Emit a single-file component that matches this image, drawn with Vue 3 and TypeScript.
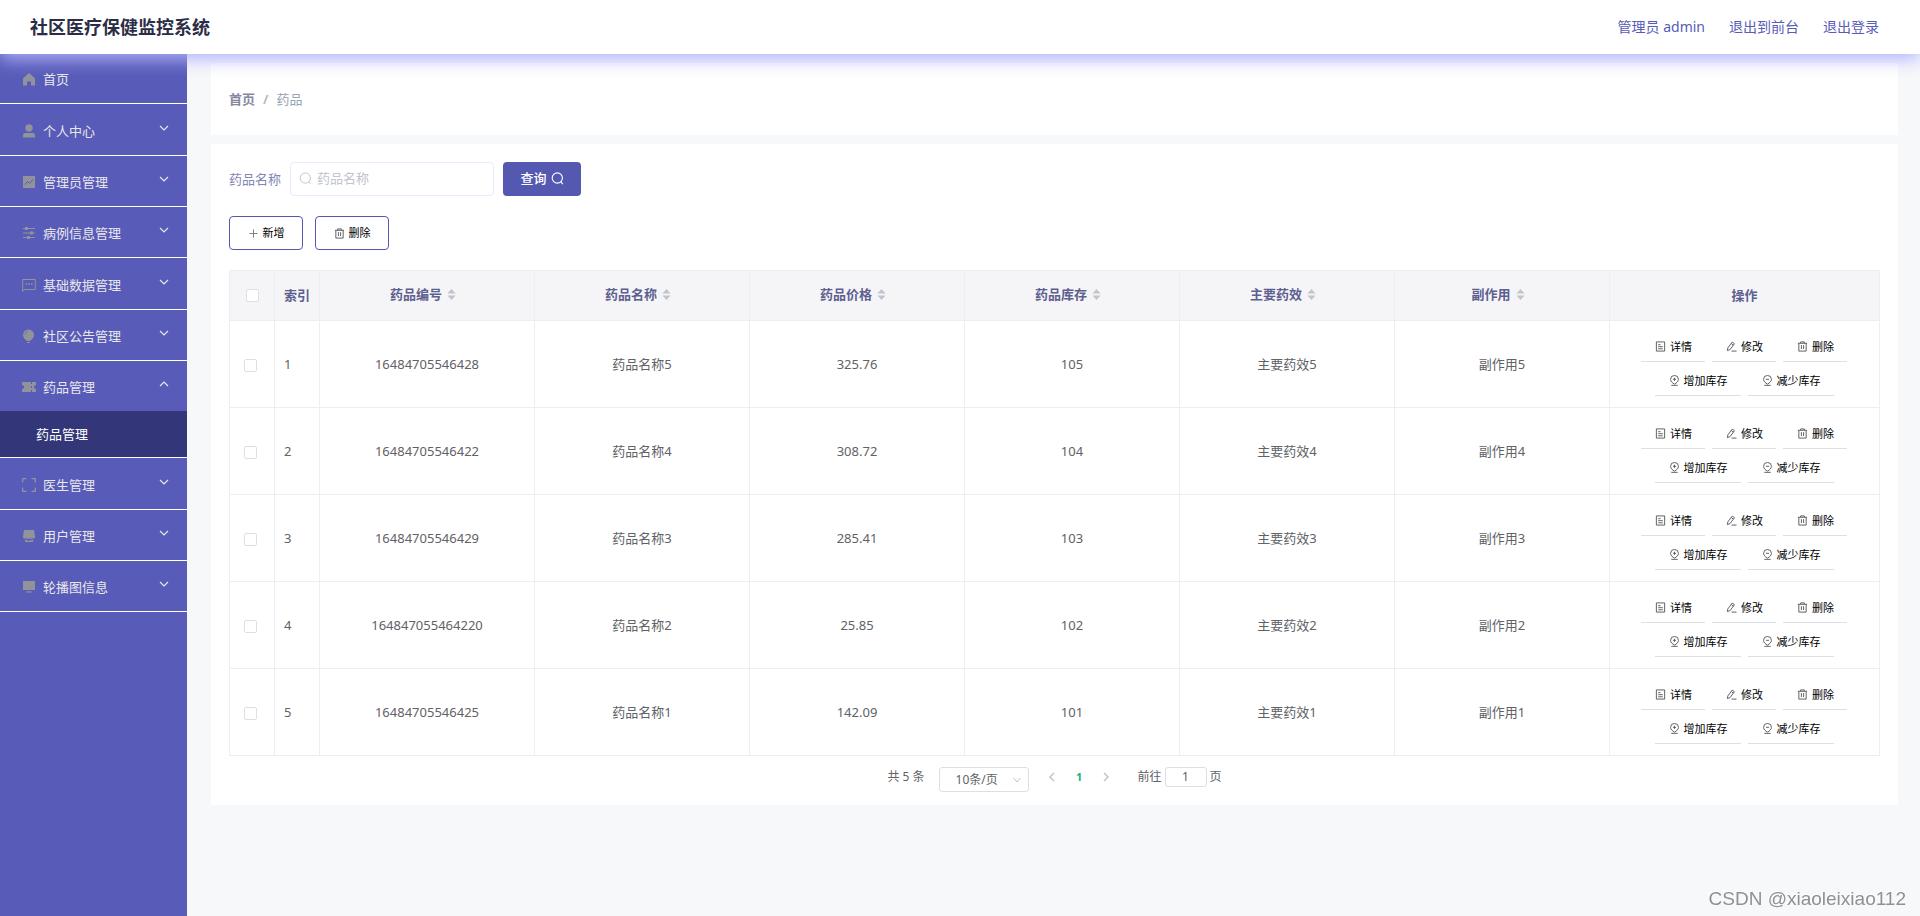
<script setup lang="ts">
import { ref } from 'vue'

interface MenuItem {
  label: string
  icon: string
  children?: string[]
}

interface Drug {
  code: string
  name: string
  price: string
  stock: string
  effect: string
  side: string
}

const menu: MenuItem[] = [
  { label: '个人中心', icon: 'user' },
  { label: '管理员管理', icon: 'chart' },
  { label: '病例信息管理', icon: 'sliders' },
  { label: '基础数据管理', icon: 'message' },
  { label: '社区公告管理', icon: 'balloon' },
  { label: '药品管理', icon: 'ticket', children: ['药品管理'] },
  { label: '医生管理', icon: 'corners' },
  { label: '用户管理', icon: 'shop' },
  { label: '轮播图信息', icon: 'monitor' },
]

const columns = ['药品编号', '药品名称', '药品价格', '药品库存', '主要药效', '副作用']

const drugs: Drug[] = [
  { code: '16484705546428', name: '药品名称5', price: '325.76', stock: '105', effect: '主要药效5', side: '副作用5' },
  { code: '16484705546422', name: '药品名称4', price: '308.72', stock: '104', effect: '主要药效4', side: '副作用4' },
  { code: '16484705546429', name: '药品名称3', price: '285.41', stock: '103', effect: '主要药效3', side: '副作用3' },
  { code: '164847055464220', name: '药品名称2', price: '25.85', stock: '102', effect: '主要药效2', side: '副作用2' },
  { code: '16484705546425', name: '药品名称1', price: '142.09', stock: '101', effect: '主要药效1', side: '副作用1' },
]

const open = ref('药品管理')
const keyword = ref('')
const selected = ref<string[]>([])
const page = ref('1')
const pageSize = ref('10')

function toggle(label: string) {
  open.value = open.value === label ? '' : label
}

function toggleAll(event: Event) {
  const checked = (event.target as HTMLInputElement).checked
  selected.value = checked ? drugs.map((d) => d.code) : []
}
</script>

<template>
  <div class="app">
    <header class="topbar">
      <h1 class="brand">社区医疗保健监控系统</h1>
      <nav class="account">
        <a href="#">管理员 admin</a>
        <a href="#">退出到前台</a>
        <a href="#">退出登录</a>
      </nav>
    </header>

    <div class="body">
      <aside class="sidebar">
        <ul class="menu">
          <li>
            <a class="entry home" href="#">
              <svg class="glyph" viewBox="0 0 14 14" aria-hidden="true">
                <path d="M7 1 1 6.200V13.500h4v-4h4v4h4V6.200z" fill="currentColor" />
              </svg>
              <span>首页</span>
            </a>
          </li>
          <li v-for="item in menu" :key="item.label">
            <button class="entry" type="button" :aria-expanded="open === item.label" @click="toggle(item.label)">
              <svg class="glyph" viewBox="0 0 14 14" aria-hidden="true">
                <g v-if="item.icon === 'user'" fill="currentColor">
                  <circle cx="7" cy="4" r="3.700" />
                  <path d="M1 13.500v-2.200A2.300 2.300 0 0 1 3.300 9h7.400A2.300 2.300 0 0 1 13 11.300v2.200z" />
                </g>
                <g v-else-if="item.icon === 'chart'">
                  <rect x="1" y="1" width="12" height="12" fill="currentColor" />
                  <path d="M3 9.500 5.500 6.500l2 2L11 4.500" fill="none" stroke="#585bb8" />
                </g>
                <g v-else-if="item.icon === 'sliders'">
                  <path d="M1 2.500h12M1 7h12M1 11.500h12" fill="none" stroke="currentColor" />
                  <path d="M3 1h3v3H3zM8 5.500h3v3H8zM5 10h3v3H5z" fill="currentColor" />
                </g>
                <g v-else-if="item.icon === 'message'" fill="none" stroke="currentColor">
                  <path d="M.7 13.300V1.500h12.600v10H2.500z" />
                  <path d="M3.500 6h1.600M6.200 6h1.600M8.900 6h1.600" stroke-width="1.600" />
                </g>
                <g v-else-if="item.icon === 'balloon'" fill="currentColor">
                  <path d="M6.500.5A5.500 5.500 0 0 1 12 6c0 3-2.500 5-4 6H5C3.500 11 1 9 1 6A5.500 5.500 0 0 1 6.500.5z" />
                  <path d="M5 13h3v1H5z" />
                  <path d="M3 5.500A3.500 3.500 0 0 1 6 2.500" fill="none" stroke="#6f72b0" />
                </g>
                <g v-else-if="item.icon === 'ticket'">
                  <path d="M0 2h14v3a2 2 0 0 0 0 4v3H0V9a2 2 0 0 0 0-4z" fill="currentColor" />
                  <path d="M9.500 2v2M9.500 6v2M9.500 10v2" stroke="#585bb8" />
                </g>
                <path v-else-if="item.icon === 'corners'" d="M.7 4.500V.7h3.800M9.500.7h3.800v3.800M13.300 9.500v3.800H9.500M4.500 13.300H.7V9.500" fill="none" stroke="currentColor" stroke-width="1.300" />
                <g v-else-if="item.icon === 'shop'" fill="currentColor">
                  <path d="M2 1h10l1 6.500a1.500 1.500 0 0 1-3 1 1.500 1.500 0 0 1-3 0 1.500 1.500 0 0 1-3 0 1.500 1.500 0 0 1-3-1z" />
                  <path d="M3 10.500h1.500v1h5v-1H11V13H3z" />
                </g>
                <g v-else fill="currentColor">
                  <path d="M1 1h12v9H1z" />
                  <path d="M6.500 11h1v.5H10v1H4v-1h2.500z" />
                </g>
              </svg>
              <span>{{ item.label }}</span>
              <svg class="arrow" :class="{ up: open === item.label }" viewBox="0 0 10 10" aria-hidden="true">
                <path d="M1 3l4 4 4-4" fill="none" stroke="currentColor" stroke-width="1.200" />
              </svg>
            </button>
            <ul v-if="item.children && open === item.label" class="submenu">
              <li v-for="child in item.children" :key="child"><a href="#">{{ child }}</a></li>
            </ul>
          </li>
        </ul>
      </aside>

      <main class="content">
        <nav class="card crumbs">
          <a href="#">首页</a>
          <span class="slash">/</span>
          <span>药品</span>
        </nav>

        <section class="card panel">
          <form class="search" @submit.prevent>
            <label for="drug-name">药品名称</label>
            <div class="field">
              <svg class="lens" viewBox="0 0 14 14" aria-hidden="true">
                <circle cx="6.800" cy="6.500" r="5.500" fill="none" stroke="currentColor" />
                <path d="M10.500 10.500 12.800 13" stroke="currentColor" />
              </svg>
              <input id="drug-name" v-model="keyword" type="text" placeholder="药品名称" />
            </div>
            <button class="query" type="submit">
              <span>查询</span>
              <svg class="lens" viewBox="0 0 14 14" aria-hidden="true">
                <circle cx="6.800" cy="6.500" r="5.500" fill="none" stroke="currentColor" stroke-width="1.200" />
                <path d="M10.500 10.500 12.800 13" stroke="currentColor" stroke-width="1.200" />
              </svg>
            </button>
          </form>

          <div class="tools">
            <button type="button">
              <svg class="mini" viewBox="0 0 12 12" aria-hidden="true">
                <path d="M1.500 6h9M6 1.500v9" fill="none" stroke="#777" />
              </svg>
              <span>新增</span>
            </button>
            <button type="button">
              <svg class="mini" viewBox="0 0 12 12" aria-hidden="true">
                <path d="M1 2.500h10M4 2.500V1h4v1.500M2 2.500V11h8V2.500M4.800 4.500v4.300M7.200 4.500v4.300" fill="none" stroke="#555" />
              </svg>
              <span>删除</span>
            </button>
          </div>

          <table class="grid">
            <colgroup>
              <col class="narrow" />
              <col class="narrow" />
              <col v-for="c in columns" :key="c" />
              <col class="wide" />
            </colgroup>
            <thead>
              <tr>
                <th class="tick"><input type="checkbox" aria-label="全选" @change="toggleAll" /></th>
                <th class="index">索引</th>
                <th v-for="c in columns" :key="c">
                  <span class="sortable">
                    {{ c }}
                    <svg class="sort" viewBox="0 0 10 12" aria-hidden="true">
                      <path d="M5 0l4.500 5h-9zM5 12 .5 7h9z" fill="currentColor" />
                    </svg>
                  </span>
                </th>
                <th>操作</th>
              </tr>
            </thead>
            <tbody>
              <tr v-for="(d, i) in drugs" :key="d.code">
                <td class="tick"><input v-model="selected" type="checkbox" :value="d.code" :aria-label="d.name" /></td>
                <td class="index">{{ i + 1 }}</td>
                <td>{{ d.code }}</td>
                <td>{{ d.name }}</td>
                <td>{{ d.price }}</td>
                <td>{{ d.stock }}</td>
                <td>{{ d.effect }}</td>
                <td>{{ d.side }}</td>
                <td>
                  <div class="actions">
                    <button type="button">
                      <svg class="mini" viewBox="0 0 12 12" aria-hidden="true">
                        <path d="M1.500 1h9v10h-9zM3.500 4H6M3.500 6.200h5M3.500 8.500h5" fill="none" stroke="#555" />
                      </svg>
                      <span>详情</span>
                    </button>
                    <button type="button">
                      <svg class="mini" viewBox="0 0 12 12" aria-hidden="true">
                        <path d="M1.500 10.500 2 7.500 6.800 1.200l2.400 1.700L4.500 9.300zM5.800 2.800l2.200 1.700M6 11h5.500" fill="none" stroke="#555" />
                      </svg>
                      <span>修改</span>
                    </button>
                    <button type="button">
                      <svg class="mini" viewBox="0 0 12 12" aria-hidden="true">
                        <path d="M1 2.500h10M4 2.500V1h4v1.500M2 2.500V11h8V2.500M4.800 4.500v4.300M7.200 4.500v4.300" fill="none" stroke="#555" />
                      </svg>
                      <span>删除</span>
                    </button>
                    <button type="button">
                      <svg class="mini" viewBox="0 0 12 12" aria-hidden="true">
                        <path d="M6 10C3.700 8.600 1.700 7 1.700 4.800a4.300 4.300 0 0 1 8.600 0C10.300 7 8.300 8.600 6 10zM2.500 11.300h7M4.300 4.700h3.400M6 3v3.400" fill="none" stroke="#555" />
                      </svg>
                      <span>增加库存</span>
                    </button>
                    <button type="button">
                      <svg class="mini" viewBox="0 0 12 12" aria-hidden="true">
                        <path d="M6 10C3.700 8.600 1.700 7 1.700 4.800a4.300 4.300 0 0 1 8.600 0C10.300 7 8.300 8.600 6 10zM2.500 11.300h7M4.300 4.700h3.400" fill="none" stroke="#555" />
                      </svg>
                      <span>减少库存</span>
                    </button>
                  </div>
                </td>
              </tr>
            </tbody>
          </table>

          <div class="pager">
            <span class="total">共 5 条</span>
            <div class="size">
              <select v-model="pageSize" aria-label="每页条数">
                <option value="10">10条/页</option>
                <option value="20">20条/页</option>
                <option value="50">50条/页</option>
              </select>
              <svg viewBox="0 0 10 10" aria-hidden="true">
                <path d="M1.500 3 5 7l3.500-4" fill="none" stroke="currentColor" />
              </svg>
            </div>
            <button class="step" type="button" aria-label="上一页" disabled>
              <svg viewBox="0 0 10 10" aria-hidden="true">
                <path d="M7 1 3 5l4 4" fill="none" stroke="currentColor" stroke-width="1.500" />
              </svg>
            </button>
            <button class="current" type="button">1</button>
            <button class="step" type="button" aria-label="下一页" disabled>
              <svg viewBox="0 0 10 10" aria-hidden="true">
                <path d="M3 1l4 4-4 4" fill="none" stroke="currentColor" stroke-width="1.500" />
              </svg>
            </button>
            <label class="jump">
              <span>前往</span>
              <input v-model="page" type="text" />
              <span>页</span>
            </label>
          </div>
        </section>
      </main>
    </div>

    <div class="watermark">CSDN @xiaoleixiao112</div>
  </div>
</template>

<style>
body {
  margin: 0;
}
</style>

<style scoped>
.app {
  display: flex;
  flex-direction: column;
  min-height: 100vh;
  background: #f7f8fa;
  color: #606266;
  font-family: "Noto Sans", "Noto Sans CJK SC", sans-serif;
  font-size: 13px;
  line-height: 20px;
}

.app * {
  box-sizing: border-box;
}

button,
input,
select {
  margin: 0;
  font: inherit;
  color: inherit;
}

button {
  padding: 0;
  border: 0;
  background: none;
  cursor: pointer;
}

a {
  color: inherit;
  text-decoration: none;
}

ul {
  margin: 0;
  padding: 0;
  list-style: none;
}

svg {
  display: block;
  flex: none;
}

.topbar {
  position: relative;
  z-index: 1;
  display: flex;
  align-items: center;
  justify-content: space-between;
  height: 54px;
  padding: 0 41px 0 30px;
  background: #fff;
  box-shadow: 0 5px 18px #b2b3fd;
}

.brand {
  margin: 0;
  color: #2b2d46;
  font-size: 18px;
  font-weight: 700;
}

.account {
  display: flex;
  gap: 24px;
  color: #585bb8;
  font-size: 14px;
}

.body {
  display: flex;
  flex: 1;
}

.sidebar {
  flex: none;
  width: 187px;
  background: #585bb8;
}

.menu > li {
  border-bottom: 1px solid #fff;
}

.entry {
  display: flex;
  align-items: center;
  width: 100%;
  height: 50px;
  padding: 2px 18px 0 22px;
  color: #e8e8ea;
  text-align: left;
}

.entry.home {
  height: 49px;
  padding-top: 0;
}

.menu > li:nth-child(3n + 2) > .entry {
  height: 51px;
}

.glyph {
  width: 14px;
  height: 14px;
  margin-right: 7px;
  color: #909399;
}

.arrow {
  width: 10px;
  height: 10px;
  margin: 0 0 6px auto;
}

.arrow.up {
  transform: rotate(180deg);
}

.submenu a {
  display: flex;
  align-items: center;
  height: 46px;
  padding-left: 36px;
  background: #333678;
  color: #fff;
}

.content {
  flex: 1;
  min-width: 0;
  padding: 9px 22px 9px 24px;
}

.card {
  background: #fff;
}

.crumbs {
  display: flex;
  align-items: center;
  gap: 8px;
  height: 72px;
  margin-bottom: 9px;
  padding: 0 18px;
  color: #97a3b8;
}

.crumbs a {
  color: #85899f;
  font-weight: 700;
}

.slash {
  color: #b4bac6;
  font-weight: 700;
}

.panel {
  padding: 18px 18px 13px;
}

.search {
  display: flex;
  align-items: center;
  gap: 9px;
}

.search label {
  color: #8286b5;
}

.field {
  position: relative;
}

.field input {
  width: 204px;
  height: 34px;
  padding: 0 10px 2px 26px;
  border: 1px solid #eaeafc;
  border-radius: 4px;
  background: #fff;
  outline: 0;
}

.field input::placeholder {
  color: #c0c4cc;
  opacity: 1;
}

.lens {
  width: 13px;
  height: 13px;
}

.field .lens {
  position: absolute;
  top: 10px;
  left: 9px;
  color: #c0c4cc;
}

.query {
  display: flex;
  align-items: center;
  justify-content: center;
  gap: 4px;
  width: 78px;
  height: 34px;
  padding-bottom: 2px;
  border-radius: 4px;
  background: #5558b1;
  color: #fff;
  font-weight: 500;
}

.tools {
  display: flex;
  gap: 12px;
  margin: 20px 0;
}

.tools button {
  display: flex;
  align-items: center;
  justify-content: center;
  gap: 4px;
  width: 74px;
  height: 34px;
  border: 1px solid #5558b1;
  border-radius: 4px;
  background: #fff;
  color: #000;
  font-size: 11px;
}

.mini {
  width: 11px;
  height: 11px;
}

.grid {
  width: 100%;
  border-collapse: collapse;
  table-layout: fixed;
}

.narrow {
  width: 45px;
}

.wide {
  width: 270px;
}

.grid th,
.grid td {
  padding: 0;
  border: 1px solid #ebeef5;
  text-align: center;
}

.grid th {
  height: 50px;
  padding-bottom: 2px;
  background: #f5f5f8;
  color: #5d5f8f;
  font-weight: 700;
}

.grid td {
  height: 87px;
}

.grid .index {
  padding-left: 9px;
  text-align: left;
}

.grid td.tick {
  padding-right: 3px;
}

.tick input {
  display: block;
  appearance: none;
  width: 13px;
  height: 13px;
  margin: 2px auto 0;
  border: 1px solid #dcdfe6;
  border-radius: 2px;
  background: #fff;
}

.tick input:checked {
  border-color: #5558b1;
  background: #5558b1;
}

.sortable {
  display: flex;
  align-items: center;
  justify-content: center;
  gap: 5px;
  padding: 0 8px 1px 0;
}

.sort {
  width: 9px;
  height: 11px;
  color: #c0c4cc;
}

.actions {
  display: flex;
  flex-wrap: wrap;
  justify-content: center;
  gap: 5px 7px;
  padding: 0 31px 0 30px;
}

.actions button {
  display: flex;
  align-items: center;
  gap: 4px;
  height: 29px;
  padding: 0 13px 0 14px;
  border-bottom: 1px solid #dcdfe6;
  color: #000;
  font-size: 11px;
}

.pager {
  display: flex;
  align-items: flex-start;
  justify-content: center;
  padding-top: 11px;
  font-size: 12px;
}

.total {
  margin-right: 14px;
}

.size {
  position: relative;
}

.size select {
  display: block;
  appearance: none;
  width: 90px;
  height: 25px;
  padding: 0 16px;
  border: 1px solid #dcdfe6;
  border-radius: 3px;
  background: #fff;
}

.size svg {
  position: absolute;
  top: 8px;
  right: 7px;
  width: 10px;
  height: 10px;
  color: #c0c4cc;
  pointer-events: none;
}

.step,
.current {
  display: flex;
  align-items: center;
  justify-content: center;
  width: 27px;
  height: 20px;
}

.step {
  color: #c0c4cc;
}

.size + .step {
  margin-left: 10px;
}

.step svg {
  width: 10px;
  height: 10px;
}

.current {
  color: #18b083;
  font-size: 11px;
  font-weight: 700;
}

.jump {
  display: flex;
  gap: 3px;
  margin-left: 18px;
}

.jump input {
  width: 42px;
  height: 20px;
  padding: 0;
  border: 1px solid #dcdfe6;
  border-radius: 3px;
  background: #fff;
  text-align: center;
}

.watermark {
  position: fixed;
  right: 14px;
  bottom: 6px;
  color: #909090;
  font-family: "Liberation Sans", sans-serif;
  font-size: 19px;
  line-height: 22px;
  text-shadow: -1px -1px 0 #fff;
}
</style>
